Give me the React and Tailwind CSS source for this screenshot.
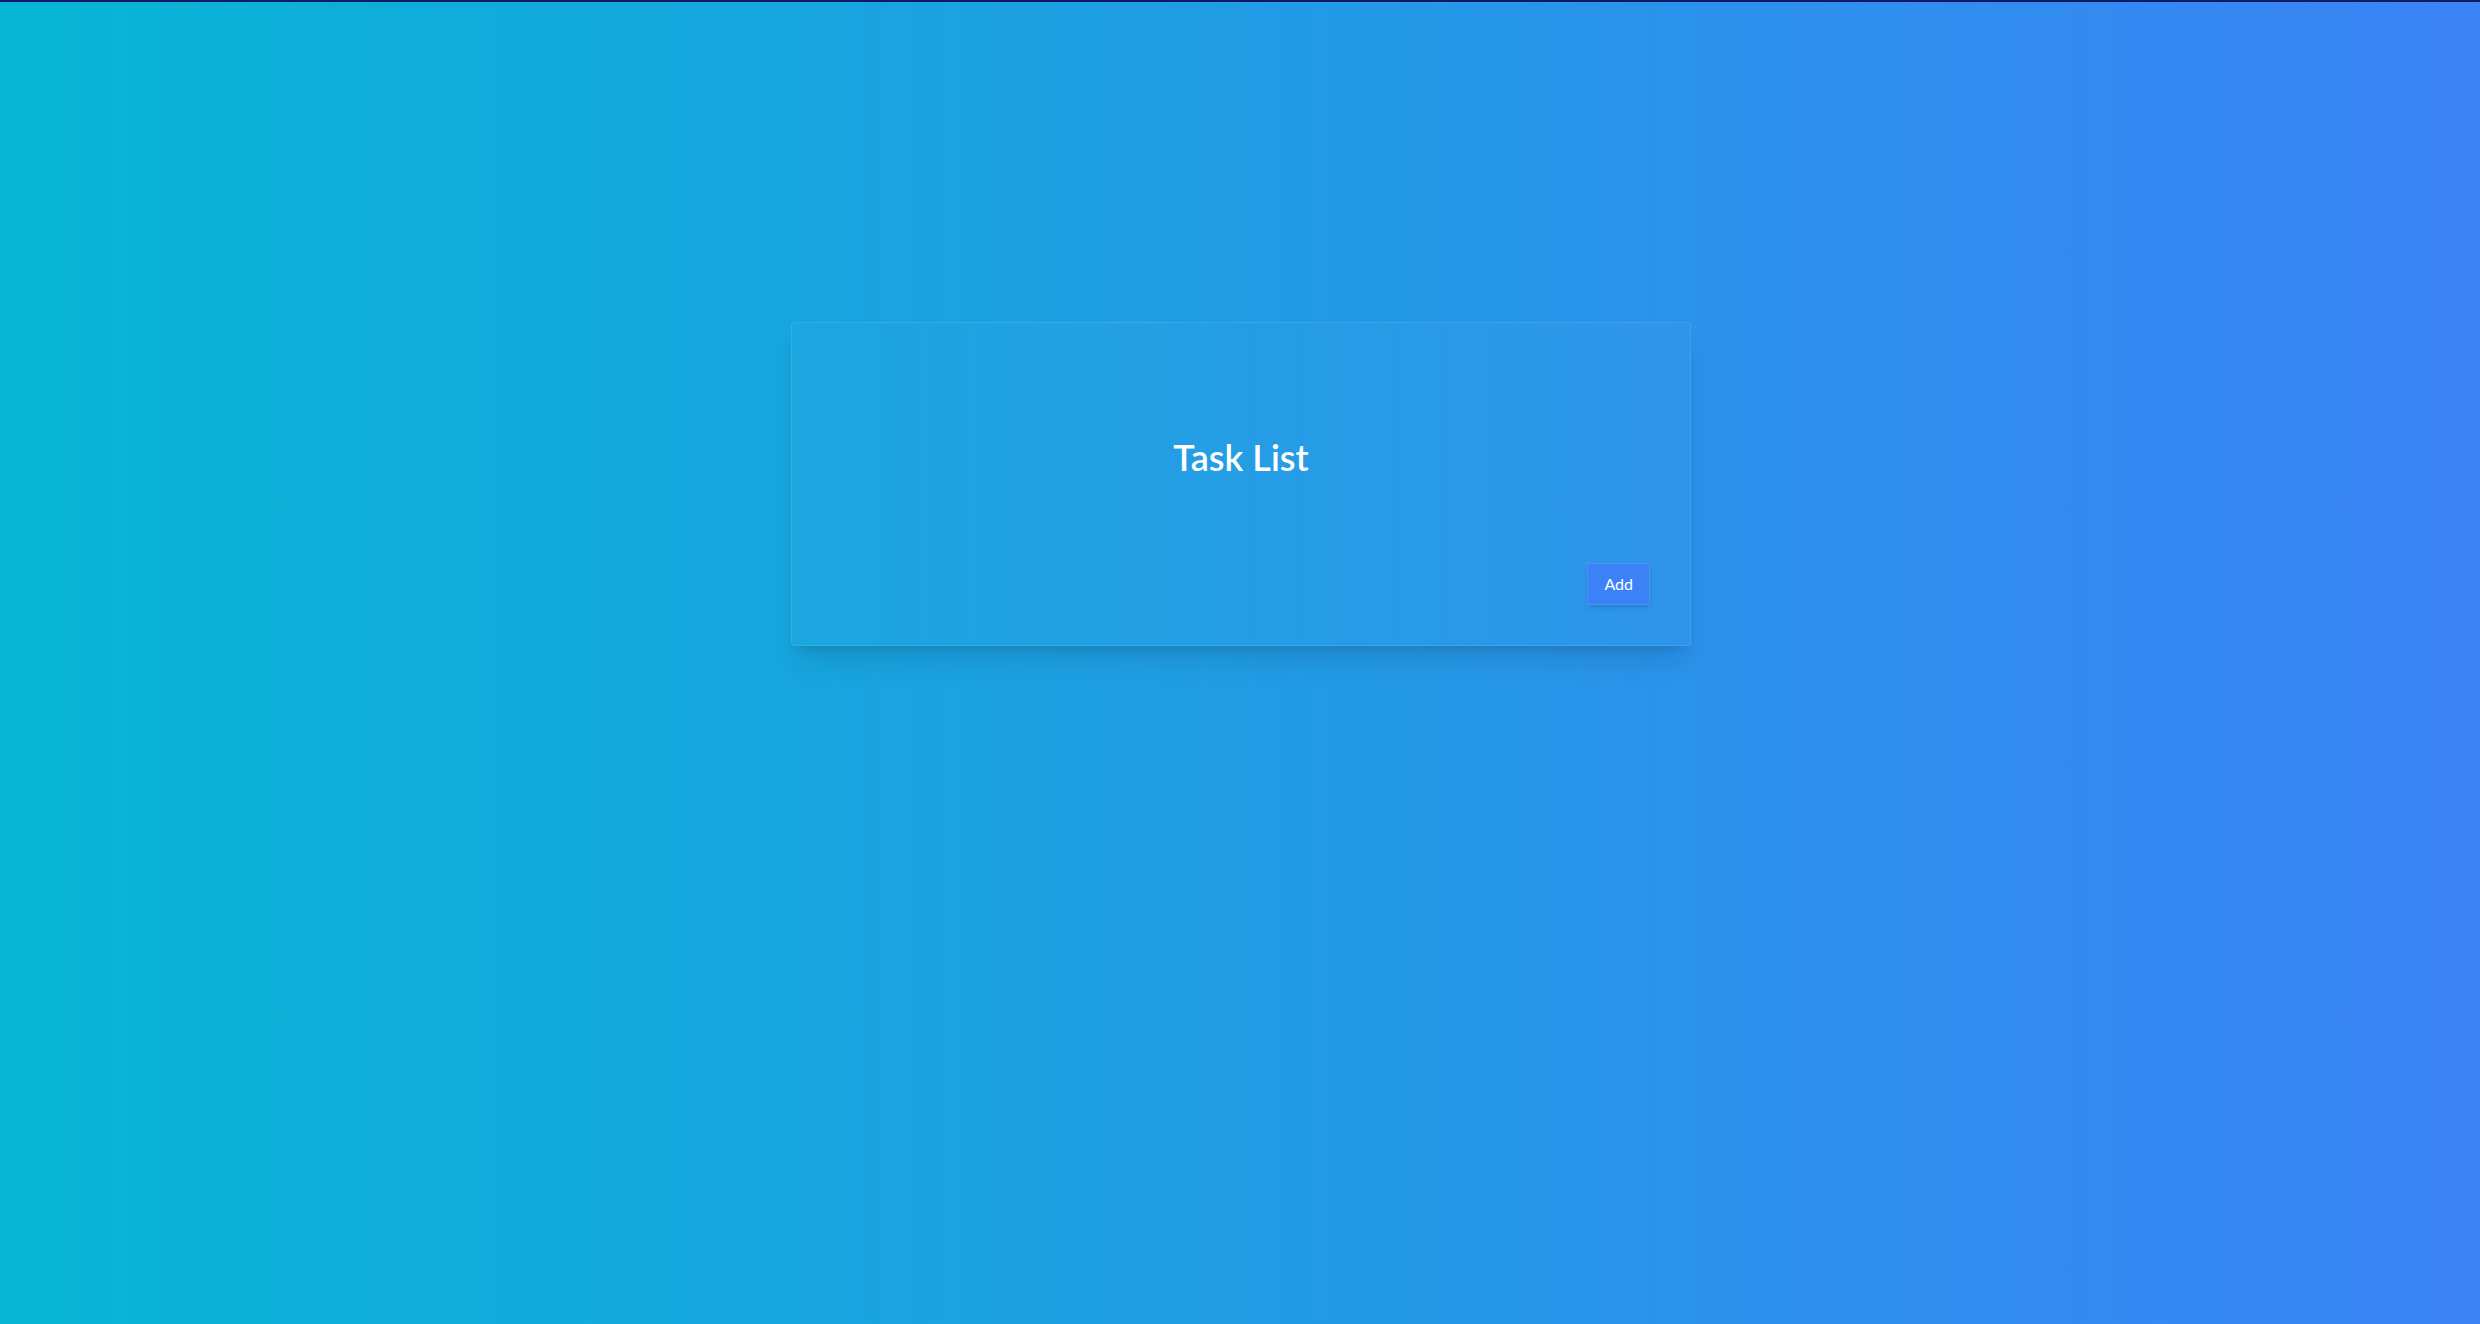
import React, { useState } from "react";

function App() {
  const [tasks, setTasks] = useState([]);

  // Add a placeholder task
  const handleAdd = () => {
    setTasks((prev) => [...prev, `Task ${prev.length + 1}`]);
  };

  return (
    <div
      className="min-h-screen w-full border-t-2 border-[#0f1a66] bg-linear-to-r/srgb from-[#06b6d4] to-[#3b82f6]"
      style={{ fontFamily: "Lato, 'Open Sans', sans-serif" }}
    >
      {/* Card */}
      <div className="mx-auto mt-80 w-full max-w-[900px] translate-x-px rounded border border-white/10 bg-white/[0.02] p-10 shadow-xl">
        <h1 className="mt-[74px] text-center text-4xl font-semibold text-white">
          Task List
        </h1>

        {tasks.length > 0 && (
          <ul className="mt-6 space-y-2 text-white">
            {tasks.map((task) => (
              <li key={task}>{task}</li>
            ))}
          </ul>
        )}

        <div className="mt-[86px] flex justify-end">
          <button
            onClick={handleAdd}
            className="min-w-[62px] border border-white/10 bg-[#3b82f6] px-4 py-2 text-base text-white shadow-md"
          >
            Add
          </button>
        </div>
      </div>
    </div>
  );
}

export default App;
